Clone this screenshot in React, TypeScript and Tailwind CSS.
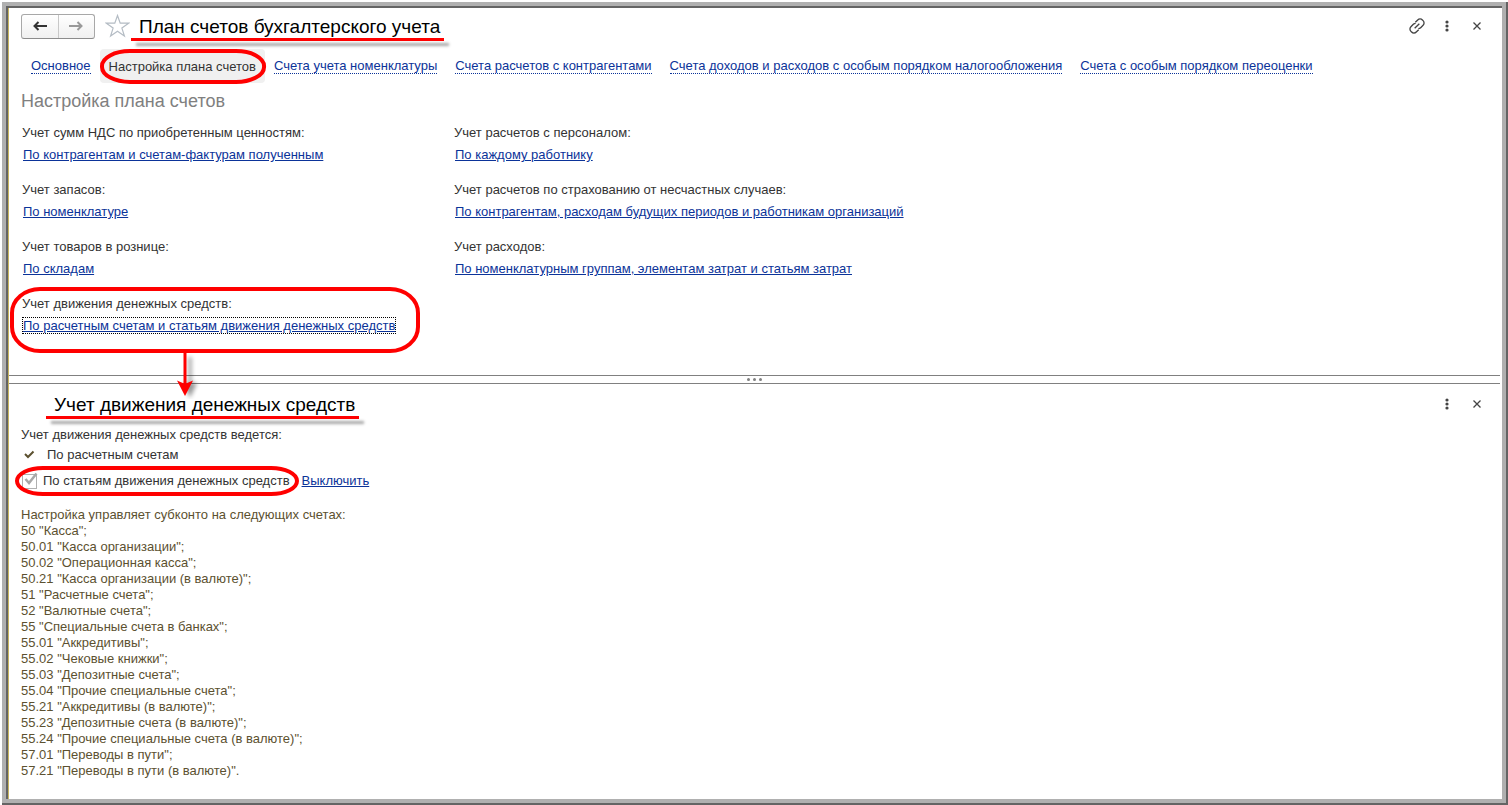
import type { ReactNode } from "react"

const tabs = [
  "Основное",
  "Настройка плана счетов",
  "Счета учета номенклатуры",
  "Счета расчетов с контрагентами",
  "Счета доходов и расходов с особым порядком налогообложения",
  "Счета с особым порядком переоценки",
]

const leftSettings = [
  { label: "Учет сумм НДС по приобретенным ценностям:", value: "По контрагентам и счетам-фактурам полученным" },
  { label: "Учет запасов:", value: "По номенклатуре" },
  { label: "Учет товаров в рознице:", value: "По складам" },
  { label: "Учет движения денежных средств:", value: "По расчетным счетам и статьям движения денежных средств", marked: true },
]

const rightSettings = [
  { label: "Учет расчетов с персоналом:", value: "По каждому работнику" },
  { label: "Учет расчетов по страхованию от несчастных случаев:", value: "По контрагентам, расходам будущих периодов и работникам организаций" },
  { label: "Учет расходов:", value: "По номенклатурным группам, элементам затрат и статьям затрат" },
]

const accounts = [
  '50 "Касса";',
  '50.01 "Касса организации";',
  '50.02 "Операционная касса";',
  '50.21 "Касса организации (в валюте)";',
  '51 "Расчетные счета";',
  '52 "Валютные счета";',
  '55 "Специальные счета в банках";',
  '55.01 "Аккредитивы";',
  '55.02 "Чековые книжки";',
  '55.03 "Депозитные счета";',
  '55.04 "Прочие специальные счета";',
  '55.21 "Аккредитивы (в валюте)";',
  '55.23 "Депозитные счета (в валюте)";',
  '55.24 "Прочие специальные счета (в валюте)";',
  '57.01 "Переводы в пути";',
  '57.21 "Переводы в пути (в валюте)".',
]

function Arrow({ className }: { className: string }) {
  return (
    <svg width="14" height="12" viewBox="0 0 14 12" className={className} fill="none" stroke="currentColor" strokeWidth="2">
      <path d="M14 6H2" />
      <path d="M5.500 2L1.500 6L5.500 10" />
    </svg>
  )
}

function MoreButton() {
  return (
    <button type="button" aria-label="Ещё" className="flex size-6 items-center justify-center text-[#444]">
      <svg width="4" height="12" viewBox="0 0 4 12" fill="currentColor">
        <circle cx="2" cy="2" r="1.6" />
        <circle cx="2" cy="6" r="1.6" />
        <circle cx="2" cy="10" r="1.6" />
      </svg>
    </button>
  )
}

function CloseButton() {
  return (
    <button type="button" aria-label="Закрыть" className="flex size-6 items-center justify-center text-[#444]">
      <svg width="8" height="8" viewBox="0 0 8 8" fill="none" stroke="currentColor" strokeWidth="1.3">
        <path d="M0.5 0.5L7.5 7.5M7.5 0.5L0.5 7.5" />
      </svg>
    </button>
  )
}

function Underlined({ children }: { children: ReactNode }) {
  return (
    <span className="relative">
      {children}
      <span className="absolute -right-1 -bottom-1 -left-2 h-[3px] bg-[#ff0000] shadow-[5px_5px_3px_rgba(0,0,0,0.35)]" />
    </span>
  )
}

function Setting({ label, value, marked }: { label: string; value: string; marked?: boolean }) {
  return (
    <div className="relative flex h-[57px] flex-col items-start">
      <span className={marked ? "h-[21px] leading-4" : "h-[22px] leading-4"}>{label}</span>
      <a
        href="#"
        className={
          marked
            ? "border border-dotted border-black leading-[15px] whitespace-nowrap text-[#0b3399] underline"
            : "px-px leading-4 whitespace-nowrap text-[#0b3399] underline"
        }
      >
        {value}
      </a>
      {marked && (
        <svg width="420" height="116" viewBox="0 0 420 116" fill="none" className="pointer-events-none absolute -top-[13px] -left-4">
          <rect x="6" y="6" width="406" height="62" rx="28" ry="24" stroke="#ff0000" strokeWidth="4" />
          <g className="blur-[2px]" opacity="0.4">
            <path d="M184 74V102" stroke="#000" strokeWidth="3" />
            <path d="M177 100L191 100L184 115Z" fill="#000" />
          </g>
          <path d="M179 68V102" stroke="#ff0000" strokeWidth="3" />
          <path d="M171 97.500L179 101L187 97.500L179 113Z" fill="#ff0000" />
        </svg>
      )}
    </div>
  )
}

export default function App() {
  return (
    <div className="flex min-h-screen bg-white pt-[2px] pl-[2px] font-['Liberation_Sans',Arial,sans-serif] text-[13px] text-[#333]">
      <div className="flex flex-1 border-r-2 border-b-2 border-[#646464]">
        <div className="flex flex-1 border-4 border-[#b0b0b0]">
          <div className="flex min-w-0 flex-1 flex-col border-t-2 border-l-2 border-[#646464]">
            <div className="flex flex-1 flex-col border-l border-[#c8b560] pr-[2px]">
              <section className="h-[367px] pl-3">
                <header className="flex h-9 items-center pr-[11px]">
                  <div className="flex h-[25px] w-[74px] rounded-[3px] border border-[#a8a8a8] border-b-[#8c8c8c] bg-gradient-to-b from-white to-[#f0f0f0]">
                    <button type="button" aria-label="Назад" className="flex flex-1 items-center justify-center border-r border-[#c8c8c8]">
                      <Arrow className="text-[#333]" />
                    </button>
                    <button type="button" aria-label="Вперед" className="flex flex-1 items-center justify-center">
                      <Arrow className="rotate-180 text-[#999]" />
                    </button>
                  </div>
                  <button type="button" aria-label="В избранное" className="ml-[10px]">
                    <svg width="25" height="24" viewBox="0 0 25 24" fill="none" stroke="#b4bcc4" strokeWidth="1.2">
                      <path d="M12.5 1.5L15.2 9.2H23.6L16.9 14.1L19.4 22L12.5 17.2L5.6 22L8.1 14.1L1.4 9.2H9.8Z" />
                    </svg>
                  </button>
                  <h1 className="mt-[2px] ml-[9px] text-[19px] leading-6 text-black">
                    <Underlined>План счетов бухгалтерского учета</Underlined>
                  </h1>
                  <div className="ml-auto flex gap-[6px]">
                    <button type="button" aria-label="Получить ссылку" className="flex size-6 items-center justify-center text-[#444]">
                      <svg width="16" height="16" viewBox="0 0 24 24" fill="none" stroke="currentColor" strokeWidth="2">
                        <path d="M9.5 6.5l3.6-3.6a4.9 4.9 0 0 1 7 0l1 1a4.9 4.9 0 0 1 0 7L17.500 14.500a4.900 4.900 0 0 1-3.500 1.400" />
                        <path d="M14.500 17.500l-3.600 3.600a4.900 4.900 0 0 1-7 0l-1-1a4.900 4.900 0 0 1 0-7L6.500 9.500a4.900 4.900 0 0 1 3.500-1.400" />
                        <path d="M8.500 15.500l7-7" />
                      </svg>
                    </button>
                    <MoreButton />
                    <CloseButton />
                  </div>
                </header>

                <nav className="mt-[5px] ml-px flex h-[34px]">
                  {tabs.map((tab, i) =>
                    i === 1 ? (
                      <a key={tab} href="#" aria-current="page" className="relative flex items-center rounded bg-[#f0f0f0] px-[9px] pt-px whitespace-nowrap">
                        {tab}
                        <svg className="pointer-events-none absolute inset-0 size-full overflow-visible" fill="none">
                          <rect x="2" y="2" width="98%" height="31" rx="28" ry="15" stroke="#ff0000" strokeWidth="4" />
                        </svg>
                      </a>
                    ) : (
                      <a key={tab} href="#" className="flex items-center px-[9px] pt-px whitespace-nowrap text-[#0b3399]">
                        <span className="border-b border-dotted border-[#0b3399] leading-[14px]">{tab}</span>
                      </a>
                    )
                  )}
                </nav>

                <h2 className="mt-[6px] text-lg leading-6 text-[#808080]">Настройка плана счетов</h2>

                <div className="mt-3 flex pl-px">
                  <div className="w-[432px]">
                    {leftSettings.map((s) => (
                      <Setting key={s.label} {...s} />
                    ))}
                  </div>
                  <div>
                    {rightSettings.map((s) => (
                      <Setting key={s.label} {...s} />
                    ))}
                  </div>
                </div>
              </section>

              <div className="flex h-[9px] items-center justify-center gap-[3px] border-y border-[#808080]">
                <span className="size-[3px] rounded-full bg-[#808080]" />
                <span className="size-[3px] rounded-full bg-[#808080]" />
                <span className="size-[3px] rounded-full bg-[#808080]" />
              </div>

              <section className="pb-5 pl-3">
                <header className="flex h-10 items-center pr-[11px]">
                  <h2 className="mt-[2px] ml-[33px] text-[19px] leading-6 text-black">
                    <Underlined>Учет движения денежных средств</Underlined>
                  </h2>
                  <div className="ml-auto flex gap-[6px]">
                    <MoreButton />
                    <CloseButton />
                  </div>
                </header>
                <p className="mt-[3px] leading-4">Учет движения денежных средств ведется:</p>
                <div className="mt-1 flex h-4 items-center">
                  <svg width="26" height="10" viewBox="0 0 26 10" fill="none" stroke="#5c5130" strokeWidth="2">
                    <path d="M4 4L7 7L12.500 1.500" />
                  </svg>
                  <span>По расчетным счетам</span>
                </div>
                <div className="mt-2 flex h-5 items-center">
                  <label className="relative flex items-center">
                    <span className="relative flex">
                      <input type="checkbox" checked readOnly className="mr-[6px] ml-px size-[15px] appearance-none border border-[#b0b0b0] bg-white" />
                      <svg width="18" height="16" viewBox="0 0 18 16" fill="none" stroke="#a8a8a8" strokeWidth="2.500" className="pointer-events-none absolute -top-[2px] left-0">
                        <path d="M4.500 7L8 11L15.500 1.500" />
                      </svg>
                    </span>
                    По статьям движения денежных средств
                    <svg className="pointer-events-none absolute -top-[5px] -left-[6px] h-[30px] w-[284px] overflow-visible" fill="none">
                      <rect x="2" y="2" width="280" height="26" rx="26" ry="13" stroke="#ff0000" strokeWidth="4" />
                    </svg>
                  </label>
                  <a href="#" className="ml-3 text-[#0b3399] underline">
                    Выключить
                  </a>
                </div>
                <div className="mt-4 leading-4 text-[#5c5130]">
                  <p>Настройка управляет субконто на следующих счетах:</p>
                  <ul>
                    {accounts.map((a) => (
                      <li key={a}>{a}</li>
                    ))}
                  </ul>
                </div>
              </section>
            </div>
          </div>
        </div>
      </div>
    </div>
  )
}
